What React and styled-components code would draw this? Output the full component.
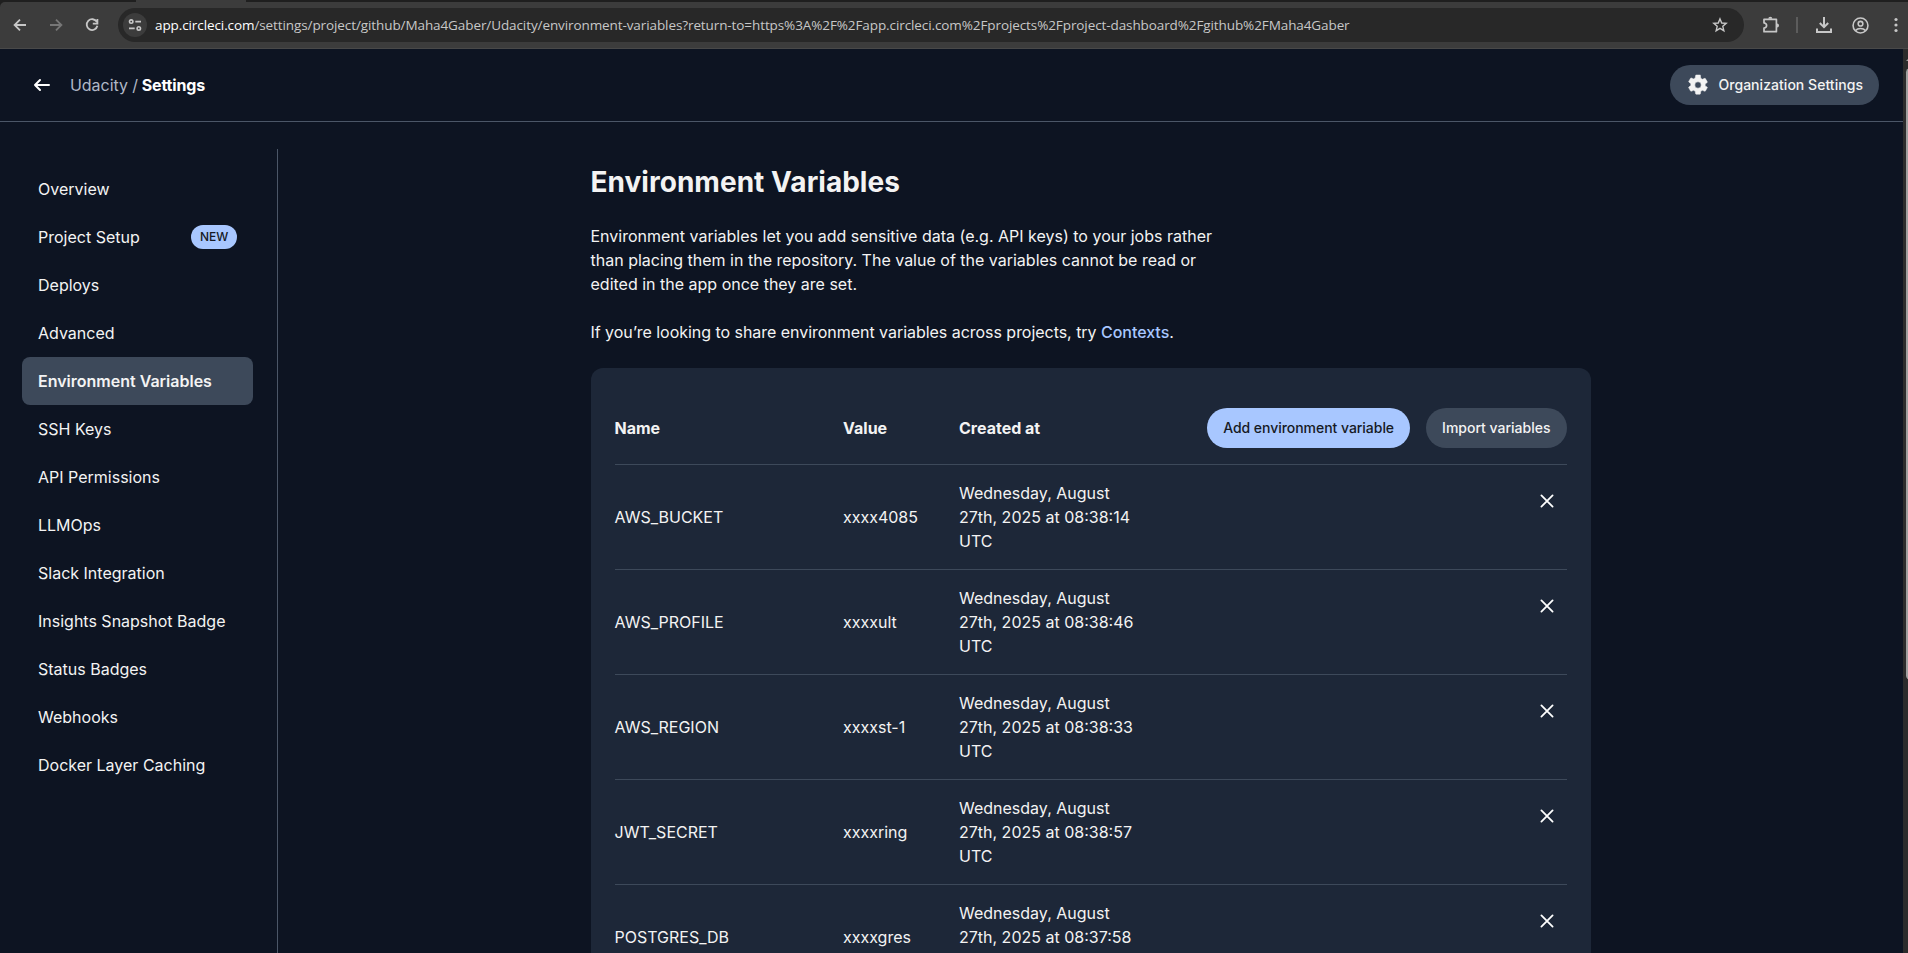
import React from "react";
import styled, { createGlobalStyle, css } from "styled-components";

const Global = createGlobalStyle`
  * { box-sizing: border-box; }
  html, body, #root { height: 100%; margin: 0; }
  body {
    background: #0d1422;
    color: #f3f3f3;
    font: 400 16px/24px Inter, "Liberation Sans", sans-serif;
    overflow: hidden;
  }
  svg { display: block; flex: none; }
`;

const Window = styled.div`
  height: 100vh;
  display: flex;
  flex-direction: column;
  overflow: hidden;
`;

const BrowserChrome = styled.div`
  flex: none;
  background: #1f1f1f;
`;

const TabStrip = styled.div`
  height: 2px;
  padding-left: 136px;
`;

const ActiveTab = styled.div`
  width: 110px;
  height: 2px;
  background: #3c3c3c;
`;

const Toolbar = styled.div`
  height: 47px;
  display: flex;
  align-items: center;
  gap: 12px;
  background: #3c3c3c;
  border-bottom: 1px solid #494949;
  border-top-left-radius: 5px;
  color: #c7c7c7;
  padding-left: 8px;
`;

const ToolButton = styled.div`
  width: 24px;
  height: 24px;
  display: flex;
  align-items: center;
  justify-content: center;
  flex: none;
  color: ${(p) => (p.$disabled ? "#777777" : "inherit")};
`;

const AddressBar = styled.div`
  flex: 1;
  height: 34px;
  border-radius: 17px;
  background: #282828;
  display: flex;
  align-items: center;
  margin: 0 3px 0 2px;
  padding: 0 16px 0 5px;
`;

const SiteInfo = styled.div`
  width: 24px;
  height: 24px;
  border-radius: 50%;
  background: #3c3c3c;
  display: flex;
  align-items: center;
  justify-content: center;
  margin-right: 8px;
`;

const Url = styled.div`
  flex: 1;
  font: 400 13.5px/20px "Open Sans", "Noto Sans", sans-serif;
  letter-spacing: -0.095px;
  color: #c7c7c7;
  white-space: nowrap;
`;

const Host = styled.span`
  color: #ffffff;
`;

const Separator = styled.div`
  width: 2px;
  height: 16px;
  background: #5c5c5c;
  margin: 0 2px 0 1px;
`;

const Viewport = styled.div`
  flex: 1;
  min-height: 0;
  display: flex;
`;

const Page = styled.div`
  flex: 1;
  min-width: 0;
  display: flex;
  flex-direction: column;
  overflow: hidden;
`;

const ScrollTrack = styled.div`
  width: 5px;
  background: #2c2c2c;
  padding-left: 3px;
  overflow: hidden;
`;

const ScrollArrow = styled.div`
  margin-top: 8px;
  border: 4px solid transparent;
  border-top: 0;
  border-bottom: 4px solid #9f9f9f;
  width: 8px;
`;

const ScrollThumb = styled.div`
  margin-top: 7px;
  width: 9px;
  height: 612px;
  border-radius: 5px;
  background: #9f9f9f;
`;

const PageHeader = styled.header`
  height: 73px;
  flex: none;
  display: flex;
  align-items: center;
  justify-content: space-between;
  border-bottom: 1px solid #4b5667;
  padding: 0 24px 0 30px;
`;

const Crumbs = styled.div`
  display: flex;
  align-items: center;
  gap: 16px;
`;

const CrumbText = styled.div`
  color: #b0b8c7;
  letter-spacing: -0.05px;
  strong {
    color: #ffffff;
    font-weight: 700;
    letter-spacing: -0.15px;
    margin-left: -0.8px;
  }
`;

const Button = styled.button`
  height: 40px;
  flex: none;
  display: flex;
  align-items: center;
  gap: 8px;
  border: 0;
  border-radius: 20px;
  padding: 0 16px;
  font: 500 14px/20px Inter, sans-serif;
  letter-spacing: ${(p) => p.$tracking || 0}px;
  white-space: nowrap;
  background: #3d495a;
  color: #f3f3f3;
  ${(p) =>
    p.$primary &&
    css`
      background: #a8c7ff;
      color: #161a24;
      letter-spacing: -0.04px;
    `}
`;

const PageBody = styled.div`
  flex: 1;
  min-height: 0;
  display: flex;
  padding-top: 27px;
`;

const Sidebar = styled.nav`
  width: 278px;
  flex: none;
  border-right: 1px solid #4b5667;
  padding: 16px 24px 0 22px;
`;

const NavItem = styled.div`
  height: 48px;
  border-radius: 8px;
  padding: 0 16px;
  display: flex;
  align-items: center;
  justify-content: space-between;
  white-space: nowrap;
  font-weight: ${(p) => (p.$active ? 600 : 400)};
  background: ${(p) => (p.$active ? "#3d495a" : "transparent")};
`;

const NewBadge = styled.span`
  height: 24px;
  border-radius: 12px;
  padding: 0 8.7px;
  background: #a8c7ff;
  color: #161a24;
  font-size: 12px;
  font-weight: 450;
  line-height: 24px;
`;

const Main = styled.main`
  flex: 1;
  display: flex;
  justify-content: center;
  padding-top: 17px;
`;

const Content = styled.div`
  width: 1000px;
`;

const Title = styled.h1`
  margin: 0 0 26px;
  font-size: 28px;
  line-height: 32px;
  font-weight: 700;
  letter-spacing: 0.03px;
`;

const Paragraph = styled.p`
  margin: 0 0 24px;
  max-width: 640px;
  letter-spacing: ${(p) => (p.$tight ? "-0.035px" : "normal")};
`;

const ContextLink = styled.a`
  color: #a8c7ff;
  font-weight: 500;
`;

const Card = styled.section`
  background: #1d2738;
  border-radius: 12px;
  padding: 24px;
`;

const Row = styled.div`
  display: grid;
  grid-template-columns: 228.5px 116px 180px 1fr;
  align-items: center;
  padding: 16px 0;
  border-bottom: 1px solid #3d495a;
  font-weight: ${(p) => (p.$head ? 650 : 400)};
`;

const Actions = styled.div`
  display: flex;
  justify-content: flex-end;
  gap: 16px;
`;

const RemoveButton = styled.div`
  width: 40px;
  height: 40px;
  justify-self: end;
  align-self: start;
  display: flex;
  align-items: center;
  justify-content: center;
`;

const LineIcon = ({ size = 16, stroke = 1.8, children }) => (
  <svg width={size} height={size} viewBox="0 0 16 16" fill="none" stroke="currentColor" strokeWidth={stroke}>
    {children}
  </svg>
);

const NAV = [
  "Overview",
  "Project Setup",
  "Deploys",
  "Advanced",
  "Environment Variables",
  "SSH Keys",
  "API Permissions",
  "LLMOps",
  "Slack Integration",
  "Insights Snapshot Badge",
  "Status Badges",
  "Webhooks",
  "Docker Layer Caching",
];

const VARIABLES = [
  ["AWS_BUCKET", "xxxx4085", "08:38:14"],
  ["AWS_PROFILE", "xxxxult", "08:38:46"],
  ["AWS_REGION", "xxxxst-1", "08:38:33"],
  ["JWT_SECRET", "xxxxring", "08:38:57"],
  ["POSTGRES_DB", "xxxxgres", "08:37:58"],
];

function BrowserToolbar() {
  return (
    <BrowserChrome>
      <TabStrip>
        <ActiveTab />
      </TabStrip>
      <Toolbar>
        <ToolButton>
          <LineIcon><path d="M14 8H3M8 2.6 2.6 8 8 13.4" /></LineIcon>
        </ToolButton>
        <ToolButton $disabled>
          <LineIcon><path d="M2 8h11M8 2.6 13.4 8 8 13.4" /></LineIcon>
        </ToolButton>
        <ToolButton>
          <LineIcon><path d="M12.8 4.9A5.4 5.4 0 1 0 13.4 8.8M13.4 2v4.6H8.8" /></LineIcon>
        </ToolButton>
        <AddressBar>
          <SiteInfo>
            <LineIcon stroke={1.6}>
              <circle cx="4.2" cy="4.6" r="1.7" />
              <path d="M8.3 4.6H14M2 11.4h5.7" />
              <circle cx="11.8" cy="11.4" r="1.7" />
            </LineIcon>
          </SiteInfo>
          <Url>
            <Host>app.circleci.com</Host>
            /settings/project/github/Maha4Gaber/Udacity/environment-variables?return-to=https%3A%2F%2Fapp.circleci.com%2Fprojects%2Fproject-dashboard%2Fgithub%2FMaha4Gaber
          </Url>
          <LineIcon stroke={1.4}>
            <path d="m8 1.9 1.75 4.1 4.45.4-3.4 2.9 1.05 4.35L8 11.3l-3.85 2.35L5.2 9.3 1.8 6.4l4.45-.4z" />
          </LineIcon>
        </AddressBar>
        <ToolButton>
          <svg width="18" height="18" viewBox="0 0 18 18" fill="none" stroke="currentColor" strokeWidth="1.7" strokeLinejoin="round">
            <path d="M2 3.3h12.4v12.4H2v-3.6c1.6-.3 2.6-1.3 2.6-2.6S3.6 7.200 2 6.900z" />
            <path d="M6.300 2.700a2 2 0 0 1 4 0zM15 7.500a2 2 0 0 1 0 4z" fill="currentColor" stroke="none" />
          </svg>
        </ToolButton>
        <Separator />
        <ToolButton>
          <LineIcon stroke={2}><path d="M8 0v10M3.8 6 8 10.2 12.2 6M1 11.5V15h14v-3.5" /></LineIcon>
        </ToolButton>
        <ToolButton>
          <LineIcon size={17} stroke={1.5}>
            <circle cx="8" cy="8" r="7" />
            <circle cx="8" cy="6.3" r="2.2" />
            <path d="M3.2 12.8c2.4-2.6 7.2-2.6 9.6 0" />
          </LineIcon>
        </ToolButton>
        <ToolButton>
          <svg width="16" height="16" viewBox="0 0 16 16" fill="currentColor">
            <circle cx="8" cy="2.5" r="1.6" />
            <circle cx="8" cy="8" r="1.6" />
            <circle cx="8" cy="13.5" r="1.6" />
          </svg>
        </ToolButton>
      </Toolbar>
    </BrowserChrome>
  );
}

export default function App() {
  return (
    <Window>
      <Global />
      <BrowserToolbar />
      <Viewport>
        <Page>
          <PageHeader>
            <Crumbs>
              <svg width="24" height="24" viewBox="0 0 24 24" fill="none" stroke="#fff" strokeWidth="2" strokeLinecap="round" strokeLinejoin="round">
                <path d="M19 12H5M10 7l-5 5 5 5" />
              </svg>
              <CrumbText>
                Udacity / <strong>Settings</strong>
              </CrumbText>
            </Crumbs>
            <Button $tracking={0.04}>
              <svg width="24" height="24" viewBox="0 0 24 24" fill="#f3f3f3" stroke="#f3f3f3" strokeWidth="0.5">
                <path d="M19.14 12.94c.04-.3.06-.61.06-.94s-.02-.64-.07-.94l2.03-1.58a.49.49 0 0 0 .12-.61l-1.92-3.32a.49.49 0 0 0-.59-.22l-2.39.96a7 7 0 0 0-1.62-.94l-.36-2.54A.48.48 0 0 0 13.92 2h-3.84a.48.48 0 0 0-.47.41l-.36 2.54c-.59.24-1.13.57-1.62.94l-2.39-.96a.48.48 0 0 0-.59.22L2.74 8.47a.48.48 0 0 0 .12.61l2.03 1.58c-.05.3-.09.63-.09.94s.02.64.07.94l-2.03 1.58a.49.49 0 0 0-.12.61l1.92 3.32c.12.22.37.29.59.22l2.39-.96c.5.38 1.03.7 1.62.94l.36 2.54c.05.24.24.41.48.41h3.84c.24 0 .44-.17.47-.41l.36-2.54c.59-.24 1.13-.56 1.62-.94l2.39.96c.22.08.47 0 .59-.22l1.92-3.32a.48.48 0 0 0-.12-.61zM12 15.2a3.2 3.2 0 1 1 0-6.4 3.2 3.2 0 0 1 0 6.4z" />
              </svg>
              Organization Settings
            </Button>
          </PageHeader>
          <PageBody>
            <Sidebar>
              {NAV.map((label) => (
                <NavItem key={label} $active={label === "Environment Variables"}>
                  {label}
                  {label === "Project Setup" && <NewBadge>NEW</NewBadge>}
                </NavItem>
              ))}
            </Sidebar>
            <Main>
              <Content>
                <Title>Environment Variables</Title>
                <Paragraph>
                  Environment variables let you add sensitive data (e.g. API keys) to your jobs rather than placing
                  them in the repository. The value of the variables cannot be read or edited in the app once they
                  are set.
                </Paragraph>
                <Paragraph $tight>
                  If you’re looking to share environment variables across projects, try{" "}
                  <ContextLink>Contexts</ContextLink>.
                </Paragraph>
                <Card>
                  <Row $head>
                    <div>Name</div>
                    <div>Value</div>
                    <div>Created at</div>
                    <Actions>
                      <Button $primary>Add environment variable</Button>
                      <Button>Import variables</Button>
                    </Actions>
                  </Row>
                  {VARIABLES.map(([name, value, time]) => (
                    <Row key={name}>
                      <div>{name}</div>
                      <div>{value}</div>
                      <div>{`Wednesday, August 27th, 2025 at ${time} UTC`}</div>
                      <RemoveButton>
                        <svg width="14" height="14" viewBox="0 0 14 14" stroke="#fff" strokeWidth="1.8" strokeLinecap="round">
                          <path d="m1.400 1.400 11.200 11.200M12.600 1.400 1.400 12.600" />
                        </svg>
                      </RemoveButton>
                    </Row>
                  ))}
                </Card>
              </Content>
            </Main>
          </PageBody>
        </Page>
        <ScrollTrack>
          <ScrollArrow />
          <ScrollThumb />
        </ScrollTrack>
      </Viewport>
    </Window>
  );
}
